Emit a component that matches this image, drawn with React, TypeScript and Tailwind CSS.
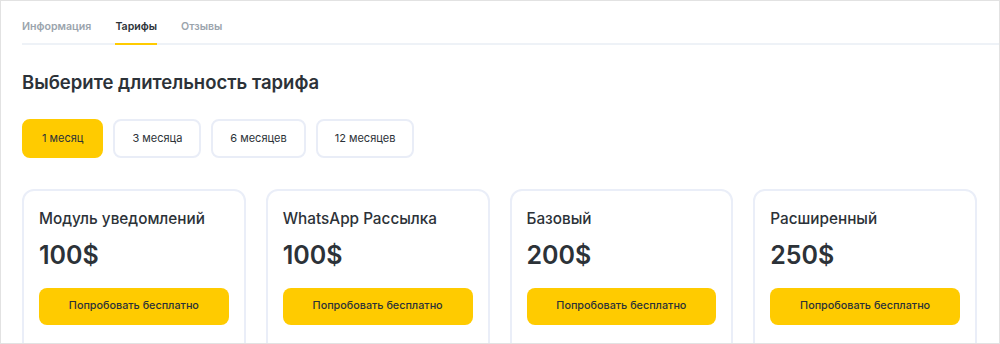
import React from "react";

const periods = ["1 месяц", "3 месяца", "6 месяцев", "12 месяцев"];
const plans = [
  { name: "Модуль уведомлений", price: "100$" },
  { name: "WhatsApp Рассылка", price: "100$" },
  { name: "Базовый", price: "200$" },
  { name: "Расширенный", price: "250$" },
];

export default function App() {
  return (
    <div
      className="w-[1000px] h-[344px] overflow-hidden bg-white border border-[#e2e2e2] text-[#2c3238]"
      style={{ fontFamily: "Inter, 'Noto Sans', sans-serif" }}
    >
      <div className="ml-[21px] flex gap-6 border-b-2 border-[#eef2f7] h-[44px] items-end">
        <div className="pb-[8px] text-[10.6px] leading-[16px] font-semibold text-[#9ba4ad]">Информация</div>
        <div className="pb-[8px] text-[10.6px] leading-[16px] font-semibold text-[#2c3238] relative">
          Тарифы
          <div className="absolute left-0 right-0 -bottom-[2px] h-[2px] bg-[#ffcb00]" />
        </div>
        <div className="pb-[8px] text-[10.6px] leading-[16px] font-semibold text-[#9ba4ad]">Отзывы</div>
      </div>
      <div className="pl-[21px] pr-[22px]">
        <h1 className="mt-[24px] text-[18.5px] leading-[26px] font-semibold text-[#2c3238]">
          Выберите длительность тарифа
        </h1>
        <div className="mt-[24px] flex gap-[10px]">
          {periods.map((p, i) => (
            <div
              key={p}
              className={
                i === 0
                  ? "h-[39px] px-[18px] rounded-[8px] bg-[#ffcb00] border-2 border-[#ffcb00] flex items-center text-[11px] text-[#2c3238]"
                  : "h-[39px] px-[17px] rounded-[8px] bg-white border-2 border-[#e9edf7] flex items-center text-[11px] text-[#2c3238]"
              }
            >
              {p}
            </div>
          ))}
        </div>
        <div className="mt-[31px] grid grid-cols-4 gap-5">
          {plans.map((pl) => (
            <div
              key={pl.name}
              className="h-[200px] rounded-[12px] border-2 border-[#eaeef8] px-[15px] pt-[17px]"
            >
              <div className="text-[15.3px] leading-[22px] font-medium text-[#2c3238]">{pl.name}</div>
              <div className="mt-[10px] text-[25px] leading-[30px] font-semibold text-[#2c3238]">{pl.price}</div>
              <div className="mt-[18px] h-[37px] rounded-[8px] bg-[#ffcb00] flex items-center justify-center text-[10.8px] font-medium text-[#2c3238]">
                Попробовать бесплатно
              </div>
            </div>
          ))}
        </div>
      </div>
    </div>
  );
}
